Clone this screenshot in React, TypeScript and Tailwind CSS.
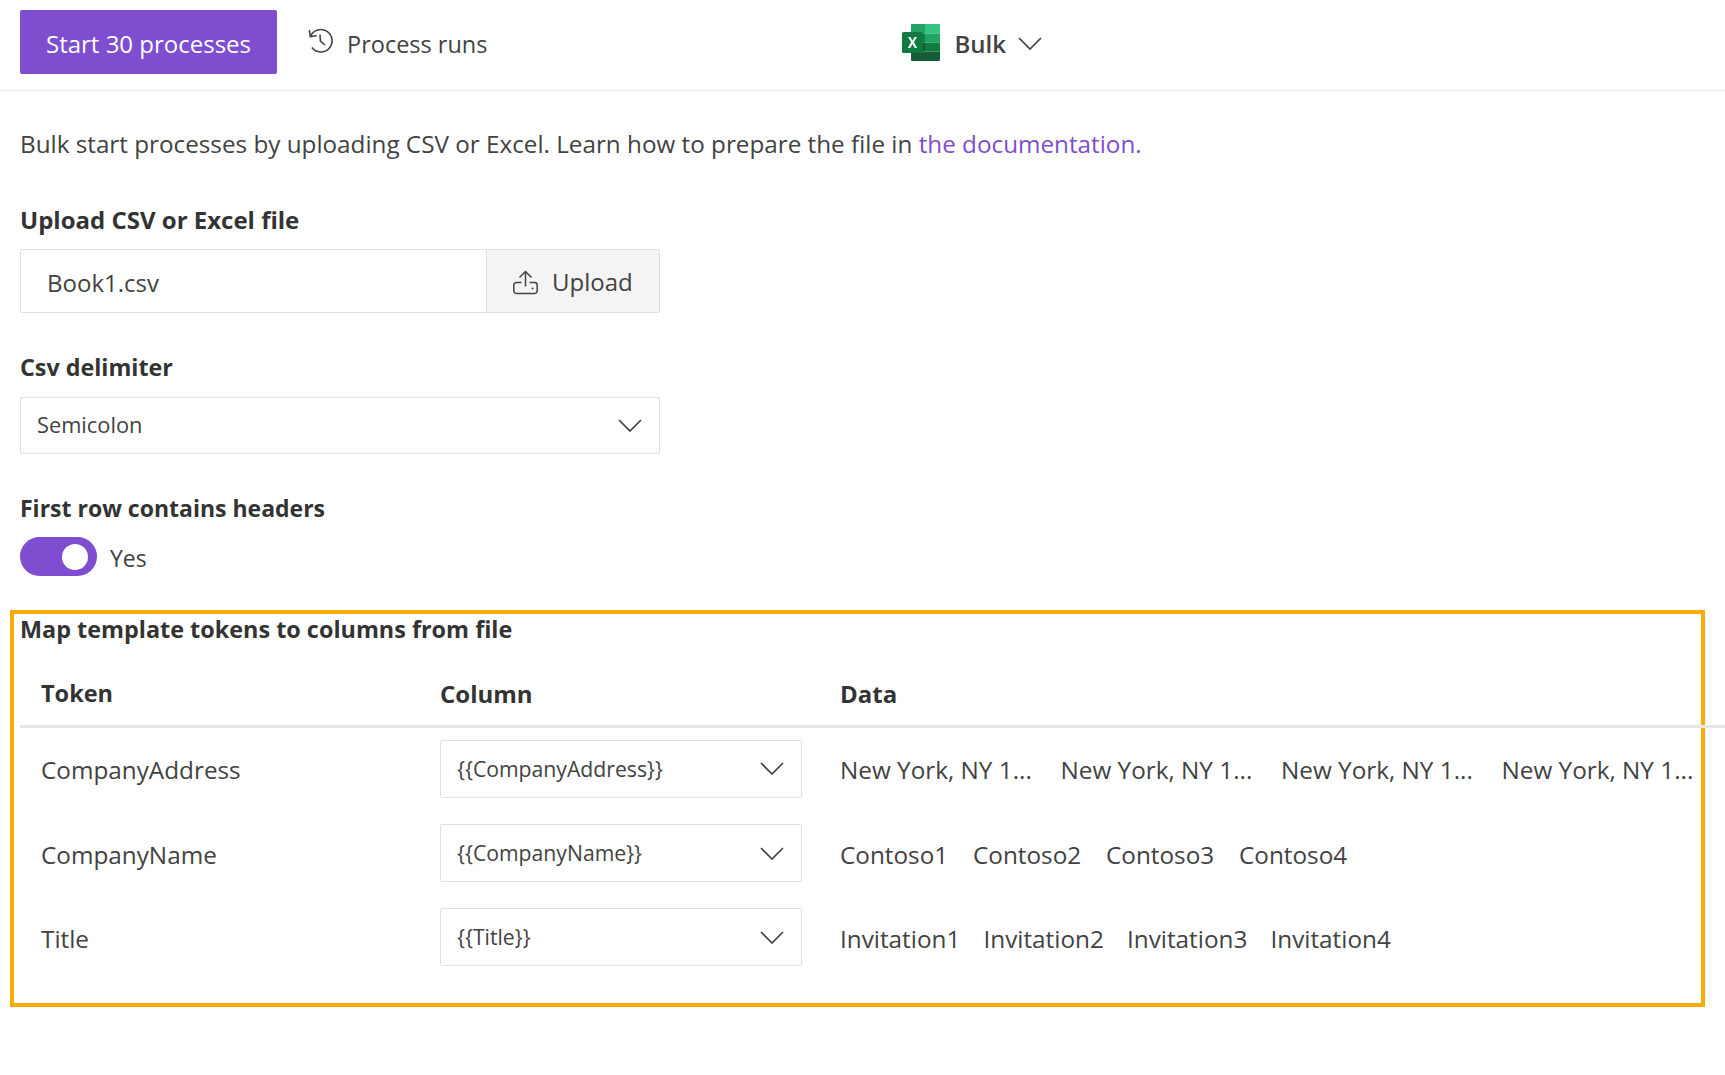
const FONT = "font-['Open_Sans',sans-serif]";

function Chevron({ className }: { className: string }) {
  return (
    <svg viewBox="0 0 24 13" fill="none" stroke="#424242" strokeWidth="1.7" className={className}>
      <path d="M1 1l11 11L23 1" />
    </svg>
  );
}

function HistoryIcon() {
  return (
    <svg viewBox="0 0 25 25" fill="none" stroke="#424242" strokeWidth="1.6" className="w-[25px] h-[25px] shrink-0 mb-[3px]">
      <path d="M2.6 8.2A11.2 11.2 0 1 1 3.9 19.5" />
      <path d="M1.4 2.2l.9 6.4 6.4-.9" />
      <path d="M12 6.6l.4 6.6 4.6 3.8" />
    </svg>
  );
}

function UploadIcon() {
  return (
    <svg viewBox="0 0 25 25" fill="none" stroke="#424242" strokeWidth="1.5" className="w-[25px] h-[25px] shrink-0">
      <path d="M12.5 16.5V1.5" />
      <path d="M6.5 7.5l6-6 6 6" />
      <path d="M8.5 12.5H3.5a2.7 2.7 0 0 0-2.7 2.7v5.6a2.7 2.7 0 0 0 2.7 2.7h18a2.7 2.7 0 0 0 2.7-2.7v-5.6a2.7 2.7 0 0 0-2.7-2.7h-5" />
      <circle cx="19.5" cy="18.5" r="1" fill="#424242" stroke="none" />
    </svg>
  );
}

function ExcelIcon() {
  return (
    <svg viewBox="0 0 38 37" className="w-[38px] h-[37px] shrink-0">
      <path d="M9 1a1 1 0 0 1 1-1h13v9.5H9z" fill="#21a366" />
      <path d="M23 0h14a1 1 0 0 1 1 1v8.5H23z" fill="#33c481" />
      <rect x="9" y="9.5" width="14" height="9" fill="#107c41" />
      <rect x="23" y="9.5" width="15" height="9" fill="#21a366" />
      <rect x="9" y="18.5" width="14" height="9" fill="#185c37" />
      <rect x="23" y="18.5" width="15" height="9" fill="#107c41" />
      <path d="M9 27.5h29V36a1 1 0 0 1-1 1H10a1 1 0 0 1-1-1z" fill="#185c37" />
      <rect x="0" y="8" width="21" height="21" rx="1.5" fill="#0f7b40" />
      <path d="M6 13l3.2 5L5.8 24h2.5l2.2-4 2.2 4h2.5l-3.4-6 3.2-5h-2.4l-2.1 3.8L8.4 13z" fill="#fff" />
    </svg>
  );
}

function Label({ children, className }: { children: string; className: string }) {
  return <div className={`leading-[32px] font-bold text-[#333] ${className}`}>{children}</div>;
}

const rows = [
  { token: "CompanyAddress", column: "{{CompanyAddress}}", data: ["New York, NY 1...", "New York, NY 1...", "New York, NY 1...", "New York, NY 1..."], step: "w-[220.5px]", h: "h-[85px]", up: "mb-[1px]" },
  { token: "CompanyName", column: "{{CompanyName}}", data: ["Contoso1", "Contoso2", "Contoso3", "Contoso4"], step: "w-[133px]", h: "h-[84px]", up: "" },
  { token: "Title", column: "{{Title}}", data: ["Invitation1", "Invitation2", "Invitation3", "Invitation4"], step: "w-[143.5px]", h: "h-[84px]", up: "" },
];

export default function App() {
  return (
    <div className={`w-[1725px] h-[1075px] overflow-hidden bg-white text-[#424242] ${FONT}`}>
      {/* Toolbar */}
      <div className="h-[91px] border-b border-[#ebebeb] pl-[20px] pt-[10px] flex items-start">
        <button className="w-[257px] h-[64px] pt-[3px] rounded-[2px] bg-[#7f4dcf] text-white text-[24px]">Start 30 processes</button>
        <div className="flex items-center h-[64px] ml-[31px] gap-[14px]">
          <HistoryIcon />
          <span className="text-[23.5px] pt-[5px]">Process runs</span>
        </div>
        <div className="flex items-center h-[64px] ml-[415px]">
          <ExcelIcon />
          <span className="text-[24px] font-semibold ml-[14px] pt-[3px]">Bulk</span>
          <Chevron className="w-[24px] h-[13px] ml-[12px] mt-[2px]" />
        </div>
      </div>

      <div className="pl-[20px] pt-[36px]">
        <div className="text-[24.25px] leading-[34px]">
          Bulk start processes by uploading CSV or Excel. Learn how to prepare the file in{" "}
          <span className="text-[#7f4dcf]">the documentation.</span>
        </div>

        <Label className="mt-[43px] text-[24px]">Upload CSV or Excel file</Label>
        <div className="mt-[13px] w-[640px] h-[64px] border border-[#e0e0e0] rounded-[2px] flex">
          <div className="flex-1 flex items-center pl-[26px] pt-[3px] text-[24px]">Book1.csv</div>
          <div className="w-[173px] bg-[#f4f4f4] border-l border-[#e0e0e0] flex items-center pl-[26px] pt-[2px] gap-[14px] text-[24px]">
            <UploadIcon />
            Upload
          </div>
        </div>

        <Label className="mt-[38px] text-[23.3px]">Csv delimiter</Label>
        <div className="mt-[14px] w-[640px] h-[57px] border border-[#e0e0e0] rounded-[2px] flex items-center justify-between pl-[16px] pr-[17px] text-[21.8px]">
          <span>Semicolon</span>
          <Chevron className="w-[24px] h-[13px]" />
        </div>

        <Label className="mt-[38px] text-[23px]">First row contains headers</Label>
        <div className="mt-[13px] flex items-center gap-[13px]">
          <div className="w-[77px] h-[39px] rounded-full bg-[#7f4dcf] flex items-center justify-end pr-[9px]">
            <div className="w-[26px] h-[26px] rounded-full bg-white" />
          </div>
          <span className="text-[23px] pt-[4px]">Yes</span>
        </div>
      </div>

      {/* Highlighted mapping section */}
      <div className="ml-[10px] mt-[34px] w-[1695px] h-[397px] border-4 border-[#f9ab08] pl-[6px]">
        <Label className="mt-[-1px] text-[23.4px]">Map template tokens to columns from file</Label>
        <div className="w-[1705px] h-[83px] border-b-[3px] border-[#e6e6e6] grid grid-cols-[420px_400px_1fr] items-center pt-[18px] text-[24px] font-bold text-[#333]">
          <div className="pl-[21px] text-[23.5px]">Token</div>
          <div>Column</div>
          <div>Data</div>
        </div>
        {rows.map((r) => (
          <div key={r.token} className={`grid grid-cols-[420px_400px_1fr] items-center ${r.h} text-[24.3px]`}>
            <div className={`pl-[21px] ${r.up}`}>{r.token}</div>
            <div className="w-[362px] h-[58px] mb-[4px] border border-[#e0e0e0] rounded-[2px] flex items-center justify-between pl-[16px] pr-[17px] text-[21.2px]">
              {r.column}
              <Chevron className="w-[24px] h-[13px]" />
            </div>
            <div className={`flex whitespace-nowrap ${r.up}`}>
              {r.data.map((d, i) => (
                <span key={i} className={r.step}>{d}</span>
              ))}
            </div>
          </div>
        ))}
      </div>
    </div>
  );
}
